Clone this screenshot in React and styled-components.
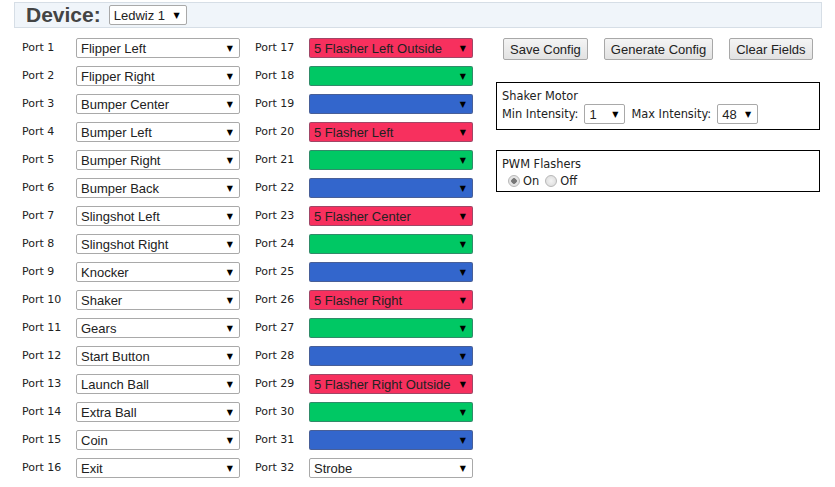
import { Fragment } from 'react';
import styled, { createGlobalStyle } from 'styled-components';

const GlobalStyle = createGlobalStyle`
  body {
    margin: 0;
    background: #fff;
    font-family: 'DejaVu Sans', Verdana, sans-serif;
    color: #222;
  }
`;

const Page = styled.div`
  padding: 2px 13px 0 14px;
  width: 808px;
`;

const DeviceBar = styled.div`
  height: 24px;
  display: flex;
  align-items: center;
  gap: 8px;
  padding-left: 11px;
  background: #f0f5fa;
  border: 1px solid #d6dee6;
`;

const DeviceTitle = styled.h1`
  margin: 0;
  font-family: 'Liberation Sans', Arial, sans-serif;
  font-size: 21px;
  font-weight: bold;
  color: #444;
  line-height: 24px;
`;

const Main = styled.div`
  display: flex;
  gap: 23px;
  margin-top: 10px;
  padding-left: 8px;
`;

const PortColumns = styled.div`
  display: flex;
  gap: 15px;
`;

const PortColumn = styled.div`
  display: grid;
  grid-template-columns: 54px 164px;
  row-gap: 8px;
`;

const PortLabel = styled.label`
  font-size: 11px;
  line-height: 20px;
  color: #222;
`;

const Select = styled.div`
  box-sizing: border-box;
  width: ${(p) => p.$width || 164}px;
  height: 20px;
  display: flex;
  align-items: center;
  justify-content: space-between;
  padding: 0 6px 0 4px;
  background: ${(p) => p.$bg || '#fff'};
  border: 1px solid ${(p) => (p.$bg ? 'rgba(90, 90, 110, 0.55)' : '#a9a9a9')};
  border-radius: 2px;
  font-family: 'Liberation Sans', Arial, sans-serif;
  font-size: 13px;
  color: #222;
  white-space: nowrap;
`;

const Arrow = styled.span`
  font-family: 'DejaVu Sans', sans-serif;
  font-size: 8px;
  color: #000;
  margin-left: 4px;
`;

const SidePanel = styled.div`
  width: 324px;
  flex-shrink: 0;
  display: flex;
  flex-direction: column;
`;

const ButtonRow = styled.div`
  display: flex;
  gap: 16px;
  padding-left: 7px;
`;

const Button = styled.button`
  flex-shrink: 0;
  height: 22px;
  padding: 0 6px;
  white-space: nowrap;
  font-family: 'Liberation Sans', Arial, sans-serif;
  font-size: 13px;
  color: #222;
  background: linear-gradient(#f4f4f4, #e2e2e2);
  border: 1px solid #a8a8a8;
  border-radius: 2px;
`;

const FieldBox = styled.div`
  box-sizing: border-box;
  margin-top: ${(p) => p.$top}px;
  height: ${(p) => p.$height}px;
  border: 1px solid #000;
  padding: 6px 5px 0;
  font-size: 11.4px;
  color: #222;
`;

const BoxTitle = styled.div`
  line-height: 14px;
`;

const InlineRow = styled.div`
  display: flex;
  align-items: center;
  gap: 6px;
  margin-top: ${(p) => p.$top || 0}px;
  padding-left: ${(p) => p.$indent || 0}px;
`;

const RadioLabel = styled.label`
  display: flex;
  align-items: center;
  gap: 3px;
`;

const Radio = styled.span`
  box-sizing: border-box;
  width: 12px;
  height: 12px;
  border-radius: 50%;
  border: 1px solid #b8b8b8;
  background: ${(p) =>
    p.$checked
      ? 'radial-gradient(circle, #777 0 2.5px, #e4e4e4 3px)'
      : 'radial-gradient(circle, #f4f4f4, #d8d8d8)'};
`;

const RED = '#f7305e';
const GREEN = '#00c864';
const BLUE = '#3366cc';

const leftPorts = [
  'Flipper Left',
  'Flipper Right',
  'Bumper Center',
  'Bumper Left',
  'Bumper Right',
  'Bumper Back',
  'Slingshot Left',
  'Slingshot Right',
  'Knocker',
  'Shaker',
  'Gears',
  'Start Button',
  'Launch Ball',
  'Extra Ball',
  'Coin',
  'Exit',
];

const flashers = [
  '5 Flasher Left Outside',
  '5 Flasher Left',
  '5 Flasher Center',
  '5 Flasher Right',
  '5 Flasher Right Outside',
];

// ports 17-31 come in red/green/blue triplets, 32 is the strobe
const rightPorts = [];
flashers.forEach((name) => {
  rightPorts.push({ text: name, bg: RED });
  rightPorts.push({ text: '', bg: GREEN });
  rightPorts.push({ text: '', bg: BLUE });
});
rightPorts.push({ text: 'Strobe' });

function Dropdown({ value, bg, width }) {
  return (
    <Select $bg={bg} $width={width}>
      <span>{value}</span>
      <Arrow>▼</Arrow>
    </Select>
  );
}

export default function App() {
  return (
    <>
      <GlobalStyle />
      <Page>
        <DeviceBar>
          <DeviceTitle>Device:</DeviceTitle>
          <Dropdown value="Ledwiz 1" width={78} />
        </DeviceBar>
        <Main>
          <PortColumns>
            <PortColumn>
              {leftPorts.map((name, i) => (
                <Fragment key={i}>
                  <PortLabel>Port {i + 1}</PortLabel>
                  <Dropdown value={name} />
                </Fragment>
              ))}
            </PortColumn>
            <PortColumn>
              {rightPorts.map((port, i) => (
                <Fragment key={i}>
                  <PortLabel>Port {i + 17}</PortLabel>
                  <Dropdown value={port.text} bg={port.bg} />
                </Fragment>
              ))}
            </PortColumn>
          </PortColumns>
          <SidePanel>
            <ButtonRow>
              <Button>Save Config</Button>
              <Button>Generate Config</Button>
              <Button>Clear Fields</Button>
            </ButtonRow>
            <FieldBox $top={22} $height={48}>
              <BoxTitle>Shaker Motor</BoxTitle>
              <InlineRow $top={1}>
                <span>Min Intensity:</span>
                <Dropdown value="1" width={41} />
                <span>Max Intensity:</span>
                <Dropdown value="48" width={41} />
              </InlineRow>
            </FieldBox>
            <FieldBox $top={20} $height={42}>
              <BoxTitle>PWM Flashers</BoxTitle>
              <InlineRow $top={3} $indent={6}>
                <RadioLabel>
                  <Radio $checked />
                  On
                </RadioLabel>
                <RadioLabel>
                  <Radio />
                  Off
                </RadioLabel>
              </InlineRow>
            </FieldBox>
          </SidePanel>
        </Main>
      </Page>
    </>
  );
}
